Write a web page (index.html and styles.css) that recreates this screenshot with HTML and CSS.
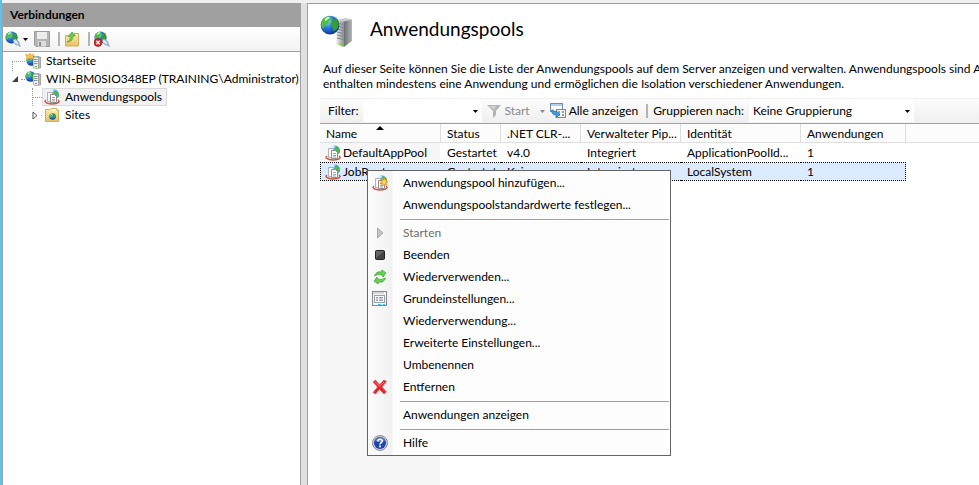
FILE: index.html
```html
<!DOCTYPE html>
<html lang="de">
<head>
    <meta charset="UTF-8">
    <meta name="viewport" content="width=device-width, initial-scale=1.0">
    <title>Anwendungspools</title>
    <link rel="stylesheet" href="styles.css">
</head>
<body>
    <svg class="defs" aria-hidden="true">
        <defs>
            <radialGradient id="g-globe" cx="0.35" cy="0.3" r="0.8">
                <stop offset="0" stop-color="#a8e4ff"/>
                <stop offset="0.4" stop-color="#2f7fe0"/>
                <stop offset="1" stop-color="#0a2a80"/>
            </radialGradient>
            <linearGradient id="g-metal" x1="0" x2="1">
                <stop offset="0" stop-color="#f4f4f4"/>
                <stop offset="1" stop-color="#8b8f92"/>
            </linearGradient>
            <linearGradient id="g-side" x1="0" x2="1">
                <stop offset="0" stop-color="#6c6f72"/>
                <stop offset="1" stop-color="#b4b7b9"/>
            </linearGradient>
            <linearGradient id="g-folder" x1="0" x2="0" y1="0" y2="1">
                <stop offset="0" stop-color="#fdf0b4"/>
                <stop offset="1" stop-color="#e8c160"/>
            </linearGradient>
        </defs>
        <symbol id="globe" viewBox="0 0 16 16">
            <circle cx="8" cy="8" r="7.5" fill="url(#g-globe)"/>
            <path d="M2 4 Q4 1 8 1 L9 3 L7 5 L7 7 L4 8 L3 11 L1 9Z" fill="#4fbf3c"/>
            <path d="M10 4 L13 3 L15 7 L14 11 L11 13 L10 10 L9 7Z" fill="#35a02c"/>
            <path d="M4 3 Q6 1 8 2 L7 3 L4 5Z" fill="#d6f7c4"/>
        </symbol>
        <symbol id="tower" viewBox="0 0 8 13">
            <path d="M0 1 L5 0 L8 1 V12 L4 13 L0 12Z" fill="#8e9295"/>
            <path d="M.5 1.5 H5 V12.5 L.5 11.5Z" fill="#eceeef"/>
            <path d="M5.5 1 L7.5 1.5 V11.5 L5.5 12.3Z" fill="#b9bcbf"/>
            <path d="M1 3.5 H4.5 M1 5.5 H4.5 M1 7.5 H4.5" stroke="#8f9396"/>
            <rect x="2" y="10" width="2" height="1" fill="#4bd02f"/>
        </symbol>
        <symbol id="plug" viewBox="0 0 16 16">
            <use href="#globe" x="0" y="0" width="13" height="13"/>
            <path d="M8 8.5 L10.5 8 L14 11 L14 13.5 L11.5 14 L8.5 11.5Z" fill="#c6d8e6" stroke="#6f8ea8" stroke-width=".8"/>
            <path d="M9.5 10 L12 12.5" stroke="#fff"/>
            <path d="M13.5 13.5 L15.5 15.5" stroke="#7fa8c4" stroke-width="1.5"/>
        </symbol>
        <symbol id="server" viewBox="0 0 16 16">
            <use href="#globe" x="0" y="0" width="11" height="11"/>
            <use href="#tower" x="8" y="2" width="8" height="13"/>
        </symbol>
        <symbol id="home" viewBox="0 0 16 16">
            <use href="#globe" x="1" y="2" width="11" height="11"/>
            <use href="#tower" x="8" y="3" width="8" height="13"/>
            <path d="M0 1 L3 2 L5 0 L6 2 L9 1 L8 4 L9 6 L5 5 L1 7 L2 4Z" fill="#f9c04c" stroke="#e09a28" stroke-width=".5"/>
        </symbol>
        <symbol id="pool" viewBox="0 0 16 16">
            <circle cx="10" cy="5.5" r="5" fill="#5fb4ea"/>
            <path d="M11 1 Q15.5 2.5 15 7.5 L12 9 L10 4Z" fill="#4fb653"/>
            <path d="M6 2 Q8 0 10 1 L9 3 L6 4Z" fill="#d9f1fb"/>
            <path d="M2 11 Q-.5 13 3.5 14.2 Q8 15.6 13 14.2 Q16.5 13 14 11" fill="none" stroke="#c8584c" stroke-width="1.5"/>
            <path d="M3.5 3.5 H8.5 V12.5 H3.5Z" fill="#f6f6f6" stroke="#a2a2a2" stroke-width=".8"/>
            <path d="M6.5 5.5 H10.5 L12.5 7.5 V13.5 H6.5Z" fill="#fff" stroke="#858585" stroke-width=".9"/>
            <path d="M8 8.5 H11 M8 10.5 H11 M8 12 H11" stroke="#8a8a8a" stroke-width=".8"/>
        </symbol>
        <symbol id="pool-new" viewBox="0 0 16 16">
            <use href="#pool" width="16" height="16"/>
            <path d="M12 2 L13 5 L15 3.5 L14.2 6 L16 7 L14 8 L15 10.5 L12.7 9 L12 11 L11 9 L9 10.5 L10 8 L8 7 L10 6 L9.5 3.5 L11.5 5Z" fill="#ffb733" stroke="#e08a1b" stroke-width=".5"/>
            <circle cx="12.2" cy="7" r="1.2" fill="#fff2a8"/>
        </symbol>
        <symbol id="sites" viewBox="0 0 16 16">
            <path d="M1.5 2.5 H6 L7 1.5 H13 V3.5 H14.5 V14.5 H1.5Z" fill="url(#g-folder)" stroke="#d3ae5c"/>
            <path d="M8 3 H12" stroke="#fff"/>
            <use href="#globe" x="5" y="6" width="7" height="7"/>
        </symbol>
        <symbol id="arrow" viewBox="0 0 5 3">
            <path d="M0 0 H5 L2.5 3Z" fill="currentColor"/>
        </symbol>
    </svg>

    <div class="window">
        <aside class="connections">
            <h2>Verbindungen</h2>
            <div class="toolbar">
                <button class="tool drop" aria-label="Verbinden">
                    <svg width="16" height="16"><use href="#plug"/></svg>
                    <svg width="5" height="3"><use href="#arrow"/></svg>
                </button>
                <button class="tool" aria-label="Speichern" disabled>
                    <svg width="16" height="16" viewBox="0 0 16 16">
                        <path d="M.5 .5 H15.5 V15.5 H2 L.5 14Z" fill="#b4b4b4" stroke="#9c9c9c"/>
                        <rect x="3" y="1" width="10" height="7" fill="#ececec"/>
                        <rect x="4" y="10" width="8" height="5.5" fill="#ddd"/>
                        <rect x="5" y="11" width="2" height="4" fill="#8f8f8f"/>
                    </svg>
                </button>
                <span class="split"></span>
                <button class="tool" aria-label="Nach oben">
                    <svg width="16" height="16" viewBox="0 0 16 16">
                        <path d="M1.5 4.5 H8 L9.5 2.5 H14.5 V15 H1.5Z" fill="url(#g-folder)" stroke="#d3ae5c"/>
                        <path d="M3 11 Q6.5 10 6.5 5.5 H4 L8 1 L11.5 5 H9 Q9 11 3 11Z" fill="#6ccb4c" stroke="#3f9c2c" stroke-width=".6"/>
                    </svg>
                </button>
                <span class="split"></span>
                <button class="tool" aria-label="Trennen">
                    <svg width="16" height="16" viewBox="0 0 16 16">
                        <use href="#plug" width="16" height="16"/>
                        <circle cx="4" cy="11.5" r="4" fill="#d22a2a" stroke="#8d1010" stroke-width=".6"/>
                        <path d="M2.3 9.8 L5.7 13.2 M5.7 9.8 L2.3 13.2" stroke="#fff" stroke-width="1.3"/>
                    </svg>
                </button>
            </div>
            <ul class="tree">
                <li>
                    <div class="node">
                        <span class="twist corner"></span>
                        <svg width="16" height="16"><use href="#home"/></svg>
                        <span class="label">Startseite</span>
                    </div>
                </li>
                <li>
                    <div class="node">
                        <span class="twist fold">
                            <svg width="7" height="7"><path d="M6 0 V6 H0Z" fill="#404040"/></svg>
                        </span>
                        <svg width="16" height="16"><use href="#server"/></svg>
                        <span class="label">WIN-BM0SIO348EP (TRAINING\Administrator)</span>
                    </div>
                    <ul>
                        <li>
                            <div class="node">
                                <span class="twist tee"></span>
                                <div class="leaf selected">
                                    <svg width="16" height="16"><use href="#pool"/></svg>
                                    <span class="label">Anwendungspools</span>
                                </div>
                            </div>
                        </li>
                        <li>
                            <div class="node">
                                <span class="twist fold">
                                    <svg width="7" height="9"><path d="M1 1 L5 4.5 L1 8Z" fill="#fff" stroke="#555"/></svg>
                                </span>
                                <div class="leaf">
                                    <svg width="16" height="16"><use href="#sites"/></svg>
                                    <span class="label">Sites</span>
                                </div>
                            </div>
                        </li>
                    </ul>
                </li>
            </ul>
        </aside>

        <main class="content">
            <header class="title">
                <svg width="34" height="34" viewBox="0 0 34 34">
                    <path d="M16 5 L26 3 L32 4.5 L24 7Z" fill="#c8cacb"/>
                    <path d="M16 5 L24 6.5 V32 L16 29.5Z" fill="url(#g-metal)"/>
                    <path d="M24 6.5 L32 4.5 V26 L24 32Z" fill="url(#g-side)"/>
                    <path d="M17 8 L23 9.5 M17 11 L23 12.5 M17 14 L23 15.5 M17 17 L23 18.5 M17 20 L23 21.5 M17 23 L23 24.5" stroke="#7d8184"/>
                    <path d="M20 28 L23 29 V31 L20 30Z" fill="#7fd428"/>
                    <use href="#globe" x="0" y="0" width="20" height="20"/>
                </svg>
                <h1>Anwendungspools</h1>
            </header>
            <p class="intro">Auf dieser Seite können Sie die Liste der Anwendungspools auf dem Server anzeigen und verwalten. Anwendungspools sind A<br>enthalten mindestens eine Anwendung und ermöglichen die Isolation verschiedener Anwendungen.</p>

            <div class="list">
                <div class="filterbar">
                    <label for="filter">Filter:</label>
                    <span class="combo filter">
                        <select id="filter"><option></option></select>
                        <svg width="5" height="3"><use href="#arrow"/></svg>
                    </span>
                    <button class="action start" disabled>
                        <svg width="14" height="14" viewBox="0 0 14 14">
                            <path d="M0 1 H14 L9 7 V11 L6 14 V7Z" fill="#b4b4b4"/>
                            <path d="M2 2 H9 L7 6Z" fill="#cfcfcf"/>
                        </svg>
                        <span>Start</span>
                        <svg class="more" width="5" height="3"><use href="#arrow"/></svg>
                    </button>
                    <button class="action">
                        <svg width="16" height="16" viewBox="0 0 16 16">
                            <rect x=".5" y=".5" width="12" height="8" fill="#fff" stroke="#6f8fb0"/>
                            <path d="M1 2 H12" stroke="#b4cfe8" stroke-width="2"/>
                            <rect x="6.5" y="6.5" width="9" height="8" fill="#f2f2f2" stroke="#888"/>
                            <path d="M8 9 H10 M12 9 H14 M8 12 H10 M12 12 H14" stroke="#888" stroke-width="1.5"/>
                            <path d="M1.5 7 Q1.5 12 6 12 V15 L10 11 L6 8 V10 Q4 10 3.5 7Z" fill="#39a0e6" stroke="#1467ad" stroke-width=".6"/>
                        </svg>
                        <span>Alle anzeigen</span>
                    </button>
                    <span class="split"></span>
                    <label for="group">Gruppieren nach:</label>
                    <span class="combo group">
                        <select id="group"><option>Keine Gruppierung</option></select>
                        <svg width="5" height="3"><use href="#arrow"/></svg>
                    </span>
                </div>

                <div class="grid">
                    <table>
                        <colgroup>
                            <col class="c-name">
                            <col class="c-status">
                            <col class="c-clr">
                            <col class="c-pipe">
                            <col class="c-ident">
                            <col class="c-apps">
                            <col>
                        </colgroup>
                        <thead>
                            <tr>
                                <th class="sorted">Name</th>
                                <th>Status</th>
                                <th>.NET CLR-...</th>
                                <th>Verwalteter Pip...</th>
                                <th>Identität</th>
                                <th>Anwendungen</th>
                                <th class="rest"></th>
                            </tr>
                        </thead>
                        <tbody>
                            <tr>
                                <td class="name"><svg width="16" height="16"><use href="#pool"/></svg>DefaultAppPool</td>
                                <td>Gestartet</td>
                                <td>v4.0</td>
                                <td>Integriert</td>
                                <td>ApplicationPoolId...</td>
                                <td>1</td>
                                <td class="rest"></td>
                            </tr>
                            <tr class="active">
                                <td class="name"><svg width="16" height="16"><use href="#pool"/></svg>JobRouter</td>
                                <td>Gestartet</td>
                                <td>Keine</td>
                                <td>Integriert</td>
                                <td>LocalSystem</td>
                                <td>1</td>
                                <td class="rest"></td>
                            </tr>
                        </tbody>
                    </table>
                </div>
            </div>
        </main>
    </div>

    <div class="menu" role="menu">
        <button role="menuitem"><span class="icon"><svg width="16" height="16"><use href="#pool-new"/></svg></span>Anwendungspool hinzufügen...</button>
        <button role="menuitem"><span class="icon"></span>Anwendungspoolstandardwerte festlegen...</button>
        <hr>
        <button role="menuitem" disabled><span class="icon">
            <svg width="16" height="16"><path d="M5.5 3 L11 8 L5.5 13Z" fill="#c4c4c4" stroke="#a8a8a8"/></svg>
        </span>Starten</button>
        <button role="menuitem"><span class="icon">
            <svg width="16" height="16"><rect x="3.5" y="3.5" width="9" height="9" rx="1" fill="#444" stroke="#222"/><path d="M4 4 H12 L4 11Z" fill="#666"/></svg>
        </span>Beenden</button>
        <button role="menuitem"><span class="icon">
            <svg width="16" height="16">
                <path d="M2.5 7 Q4 2 9.5 3 L10 1 L14 4 L11 8 L10 6 Q6 4.5 2.5 7Z" fill="#66cf55" stroke="#38a52c" stroke-width=".7"/>
                <path d="M13.5 9 Q12 14 6.5 13 L6 15 L2 12 L5 8 L6 10 Q10 11.5 13.5 9Z" fill="#66cf55" stroke="#38a52c" stroke-width=".7"/>
            </svg>
        </span>Wiederverwenden...</button>
        <button role="menuitem"><span class="icon">
            <svg width="16" height="16">
                <rect x=".5" y=".5" width="14" height="14" fill="#f2f4f6" stroke="#85898e"/>
                <path d="M1 2 H12" stroke="#d5d9de" stroke-width="2"/>
                <rect x="2.5" y="4.5" width="10" height="7" fill="#fff" stroke="#9aa0a6"/>
                <path d="M4 6.5 H6 M7 6.5 H11 M4 8 H6 M7 8 H11 M4 9.5 H6 M7 9.5 H11" stroke="#7c858e" stroke-width=".8"/>
                <path d="M6 13.5 H9 M11 13.5 H13" stroke="#35c3ee"/>
            </svg>
        </span>Grundeinstellungen...</button>
        <button role="menuitem"><span class="icon"></span>Wiederverwendung...</button>
        <button role="menuitem"><span class="icon"></span>Erweiterte Einstellungen...</button>
        <button role="menuitem"><span class="icon"></span>Umbenennen</button>
        <button role="menuitem"><span class="icon">
            <svg width="16" height="16"><path d="M1 3 L3.5 1 L7.5 5.5 L12 1 L14.5 2.5 L10 8 L14.5 13 L12 15 L7.5 10.5 L3.5 15 L1 13.5 L5.5 8Z" fill="#e8262a" stroke="#b86a6a" stroke-width=".7"/><path d="M3 3 L7.5 7 L12 3" fill="none" stroke="#f57b74"/></svg>
        </span>Entfernen</button>
        <hr>
        <button role="menuitem"><span class="icon"></span>Anwendungen anzeigen</button>
        <hr>
        <button role="menuitem"><span class="icon">
            <svg width="16" height="16">
                <circle cx="8" cy="8" r="7.5" fill="#d0d0d0" stroke="#777" stroke-width=".8"/>
                <circle cx="8" cy="8" r="6" fill="#1f45b5"/>
                <path d="M3 6 Q5 2.5 9 2.5 Q12 3 13 6 Q8 8 3 6Z" fill="#5c82df"/>
                <path d="M5.8 6.3 Q6 4.3 8 4.3 Q10.2 4.3 10.2 6.1 Q10.2 7.3 8.9 7.9 Q8 8.3 8 9.5" fill="none" stroke="#fff" stroke-width="1.6"/>
                <rect x="7.1" y="10.5" width="1.8" height="1.8" fill="#fff"/>
            </svg>
        </span>Hilfe</button>
    </div>
</body>
</html>
```

FILE: styles.css
```css
* {
    box-sizing: border-box;
}
body {
    margin: 0;
    height: 100vh;
    overflow: hidden;
    background-color: #f0f0f0;
    color: #000;
    font-family: "Segoe UI", Lato, sans-serif;
    font-size: 12px;
    line-height: 14px;
}
button, select {
    margin: 0;
    padding: 0;
    border: none;
    background: none;
    color: inherit;
    font: inherit;
}
svg {
    display: block;
    flex: none;
}
.defs {
    position: absolute;
    width: 0;
    height: 0;
}
.window {
    display: flex;
    height: 100%;
    padding-top: 3px;
    border-left: 2px solid #5cc3ee;
    background: linear-gradient(#f0f0f0 3px, #e1e1e1 3px);
}

/* left pane */
.connections {
    flex: none;
    width: 299px;
    border-left: 1px solid #a0a0a0;
    border-right: 1px solid #a0a0a0;
    background-color: #fff;
}
.connections h2 {
    margin: 0;
    height: 24px;
    padding-left: 7px;
    background-color: #a0a0a0;
    font-size: 12px;
    line-height: 24px;
}
.toolbar {
    display: flex;
    align-items: center;
    gap: 6px;
    height: 25px;
    padding-left: 2px;
    border-bottom: 1px solid #a0a0a0;
    background: linear-gradient(#fff, #f2f2f2);
}
.tool {
    display: flex;
    align-items: center;
}
.drop {
    gap: 2px;
}
.split {
    flex: none;
    width: 2px;
    height: 14px;
    background-color: #b4b4b4;
}
.toolbar .split {
    margin: 0 -2px 0 2px;
}
.tree, .tree ul {
    margin: 0;
    padding: 0;
    list-style: none;
}
.tree ul {
    padding-left: 20px;
}
.node {
    display: flex;
    align-items: center;
    height: 18px;
    white-space: nowrap;
}
.label {
    margin-left: 5px;
}
.twist {
    display: flex;
    align-items: center;
    flex: none;
    width: 22px;
    height: 18px;
    padding-left: 9px;
}
.twist.corner::before {
    content: "";
    width: 12px;
    height: 9px;
    margin-top: 9px;
    border-left: 1px dotted #999;
    border-top: 1px dotted #999;
}
.tree ul .twist {
    width: 19px;
    padding-left: 9px;
}
.twist.fold::after {
    content: "";
    flex: 1;
    margin-left: 2px;
    border-top: 1px dotted #999;
}
.twist.tee::before {
    content: "";
    height: 18px;
    border-left: 1px dotted #999;
}
.twist.tee::after {
    content: "";
    flex: 1;
    border-top: 1px dotted #999;
}
.leaf {
    display: flex;
    align-items: center;
    height: 18px;
    padding: 0 4px 0 1px;
    border: 1px solid transparent;
}
.selected {
    border-color: #d9d9d9;
    background-color: #f2f2f2;
}

/* right pane */
.content {
    display: flex;
    flex-direction: column;
    flex: 1;
    min-width: 0;
    margin-left: 6px;
    padding-left: 12px;
    border-left: 1px solid #a0a0a0;
    border-top: 1px solid #a0a0a0;
    background-color: #fff;
    overflow: hidden;
}
.title {
    display: flex;
    gap: 16px;
    padding-top: 11px;
}
.title h1 {
    margin: 0;
    font-size: 19px;
    font-weight: 400;
    line-height: 28px;
}
.intro {
    margin: 12px 0 0 3px;
    line-height: 15px;
    white-space: nowrap;
}
.list {
    display: flex;
    flex-direction: column;
    flex: 1;
    margin-top: 7px;
}
.filterbar {
    display: flex;
    align-items: center;
    height: 26px;
    padding-left: 8px;
    border-top: 1px solid #f0f0f0;
    border-bottom: 1px solid #a0a0a0;
    background: linear-gradient(#fcfcfc, #efefef);
    white-space: nowrap;
}
.combo {
    display: flex;
    align-items: center;
    height: 22px;
    margin-left: 5px;
    background-color: #fff;
}
.combo select {
    flex: 1;
    height: 22px;
    padding-left: 4px;
    appearance: none;
}
.combo svg {
    margin-left: -8px;
    margin-right: 4px;
    pointer-events: none;
}
.combo.filter {
    width: 119px;
}
.combo.group {
    width: 165px;
}
.action {
    display: flex;
    align-items: center;
    gap: 3px;
}
.action.start {
    margin: 0 5px;
    color: #8a8a8a;
}
.action .more {
    margin-left: 7px;
}
.filterbar .split {
    margin: 0 5px 0 8px;
}
.grid {
    flex: 1;
    background: linear-gradient(#f7f7f7, #f7f7f7) 0 0 / 120px 100% no-repeat;
}
table {
    width: 100%;
    border-collapse: separate;
    border-spacing: 0;
    line-height: 15px;
    table-layout: fixed;
}
.c-name {
    width: 121px;
}
.c-status {
    width: 60px;
}
.c-clr {
    width: 80px;
}
.c-pipe {
    width: 100px;
}
.c-ident {
    width: 120px;
}
.c-apps {
    width: 105px;
}
th, td {
    height: 19px;
    padding: 0 0 0 6px;
    font-weight: 400;
    text-align: left;
    white-space: nowrap;
    overflow: hidden;
}
th {
    border-right: 1px solid #dedede;
    border-bottom: 1px solid #dedede;
    background-color: #fcfcfc;
}
th.rest {
    border-right: none;
}
th.sorted::after {
    content: "";
    display: inline-block;
    margin-left: 19px;
    border: 4px solid transparent;
    border-top-width: 0;
    border-bottom-color: #000;
    vertical-align: 8px;
}
td.name {
    padding: 0 0 0 5px;
}
td.name svg {
    display: inline-block;
    margin-right: 2px;
    vertical-align: -4px;
}
.active td:not(.rest) {
    border-top: 1px dotted #000;
    border-bottom: 1px dotted #000;
    background-color: #dceaff;
}
.active td.name {
    padding-left: 4px;
    border-left: 1px dotted #000;
}
.active td:nth-child(6) {
    border-right: 1px dotted #000;
}

/* context menu */
.menu {
    position: absolute;
    left: 367px;
    top: 170px;
    width: 304px;
    padding: 1px;
    border: 1px solid #646464;
    background: linear-gradient(90deg, #fcfcfc, #f1f1f1 24px, #fdfdfd 25px);
}
.menu button {
    display: flex;
    align-items: center;
    width: 100%;
    height: 22px;
    text-align: left;
    white-space: nowrap;
}
.menu button:disabled {
    color: #6d6d6d;
}
.menu .icon {
    flex: none;
    width: 30px;
    margin-right: 4px;
    padding-left: 3px;
}
.menu hr {
    height: 1px;
    margin: 3px 0 2px 31px;
    border: none;
    background-color: #a0a0a0;
}
```
